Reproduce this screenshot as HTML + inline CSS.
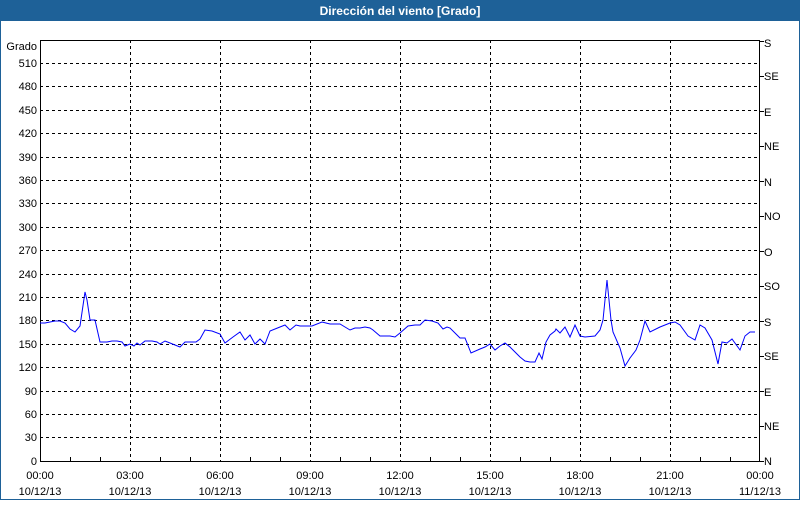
<!DOCTYPE html>
<html><head><style>
body{margin:0;width:800px;height:500px;overflow:hidden;background:#fff;font-family:"Liberation Sans",sans-serif;}
</style></head><body>
<svg width="800" height="500" xmlns="http://www.w3.org/2000/svg" font-family="Liberation Sans, sans-serif" font-size="11">
<rect x="0" y="0" width="800" height="500" fill="#fff"/>
<rect x="0" y="0" width="800" height="21" fill="#1e6198"/>
<rect x="0.5" y="0.5" width="799" height="499" fill="none" stroke="#1e6198"/>
<text x="400" y="15" fill="#fff" font-weight="bold" font-size="12" text-anchor="middle">Dirección del viento [Grado]</text>
<g stroke="#000" stroke-dasharray="3,3" stroke-width="1">
<line x1="40" y1="63.5" x2="760" y2="63.5"/><line x1="40" y1="86.5" x2="760" y2="86.5"/><line x1="40" y1="110.5" x2="760" y2="110.5"/><line x1="40" y1="133.5" x2="760" y2="133.5"/><line x1="40" y1="157.5" x2="760" y2="157.5"/><line x1="40" y1="180.5" x2="760" y2="180.5"/><line x1="40" y1="203.5" x2="760" y2="203.5"/><line x1="40" y1="227.5" x2="760" y2="227.5"/><line x1="40" y1="250.5" x2="760" y2="250.5"/><line x1="40" y1="274.5" x2="760" y2="274.5"/><line x1="40" y1="297.5" x2="760" y2="297.5"/><line x1="40" y1="320.5" x2="760" y2="320.5"/><line x1="40" y1="344.5" x2="760" y2="344.5"/><line x1="40" y1="367.5" x2="760" y2="367.5"/><line x1="40" y1="391.5" x2="760" y2="391.5"/><line x1="40" y1="414.5" x2="760" y2="414.5"/><line x1="40" y1="437.5" x2="760" y2="437.5"/>
<line x1="130.5" y1="40" x2="130.5" y2="461"/><line x1="220.5" y1="40" x2="220.5" y2="461"/><line x1="310.5" y1="40" x2="310.5" y2="461"/><line x1="400.5" y1="40" x2="400.5" y2="461"/><line x1="490.5" y1="40" x2="490.5" y2="461"/><line x1="580.5" y1="40" x2="580.5" y2="461"/><line x1="670.5" y1="40" x2="670.5" y2="461"/>
</g>
<rect x="40.5" y="40.5" width="719" height="421" fill="none" stroke="#000"/>
<g stroke="#000">
<line x1="70.5" y1="457" x2="70.5" y2="461"/><line x1="100.5" y1="457" x2="100.5" y2="461"/><line x1="160.5" y1="457" x2="160.5" y2="461"/><line x1="190.5" y1="457" x2="190.5" y2="461"/><line x1="250.5" y1="457" x2="250.5" y2="461"/><line x1="280.5" y1="457" x2="280.5" y2="461"/><line x1="340.5" y1="457" x2="340.5" y2="461"/><line x1="370.5" y1="457" x2="370.5" y2="461"/><line x1="430.5" y1="457" x2="430.5" y2="461"/><line x1="460.5" y1="457" x2="460.5" y2="461"/><line x1="520.5" y1="457" x2="520.5" y2="461"/><line x1="550.5" y1="457" x2="550.5" y2="461"/><line x1="610.5" y1="457" x2="610.5" y2="461"/><line x1="640.5" y1="457" x2="640.5" y2="461"/><line x1="700.5" y1="457" x2="700.5" y2="461"/><line x1="730.5" y1="457" x2="730.5" y2="461"/>
<line x1="760" y1="41.5" x2="764" y2="41.5"/><line x1="760" y1="76.5" x2="764" y2="76.5"/><line x1="760" y1="111.5" x2="764" y2="111.5"/><line x1="760" y1="146.5" x2="764" y2="146.5"/><line x1="760" y1="181.5" x2="764" y2="181.5"/><line x1="760" y1="216.5" x2="764" y2="216.5"/><line x1="760" y1="251.5" x2="764" y2="251.5"/><line x1="760" y1="286.5" x2="764" y2="286.5"/><line x1="760" y1="321.5" x2="764" y2="321.5"/><line x1="760" y1="356.5" x2="764" y2="356.5"/><line x1="760" y1="391.5" x2="764" y2="391.5"/><line x1="760" y1="426.5" x2="764" y2="426.5"/><line x1="760" y1="461.5" x2="764" y2="461.5"/>
</g>
<g fill="#000" text-anchor="end">
<text x="37" y="50">Grado</text>
<text x="37" y="67">510</text><text x="37" y="90">480</text><text x="37" y="114">450</text><text x="37" y="137">420</text><text x="37" y="161">390</text><text x="37" y="184">360</text><text x="37" y="207">330</text><text x="37" y="231">300</text><text x="37" y="254">270</text><text x="37" y="278">240</text><text x="37" y="301">210</text><text x="37" y="324">180</text><text x="37" y="348">150</text><text x="37" y="371">120</text><text x="37" y="395">90</text><text x="37" y="418">60</text><text x="37" y="441">30</text><text x="37" y="465">0</text>
</g>
<g fill="#000">
<text x="764" y="47">S</text><text x="764" y="80">SE</text><text x="764" y="116">E</text><text x="764" y="150">NE</text><text x="764" y="186">N</text><text x="764" y="220">NO</text><text x="764" y="256">O</text><text x="764" y="290">SO</text><text x="764" y="326">S</text><text x="764" y="360">SE</text><text x="764" y="396">E</text><text x="764" y="430">NE</text><text x="764" y="465">N</text>
</g>
<g fill="#000" text-anchor="middle">
<text x="40" y="479">00:00</text><text x="40" y="495">10/12/13</text>
<text x="130" y="479">03:00</text><text x="130" y="495">10/12/13</text>
<text x="220" y="479">06:00</text><text x="220" y="495">10/12/13</text>
<text x="310" y="479">09:00</text><text x="310" y="495">10/12/13</text>
<text x="400" y="479">12:00</text><text x="400" y="495">10/12/13</text>
<text x="490" y="479">15:00</text><text x="490" y="495">10/12/13</text>
<text x="580" y="479">18:00</text><text x="580" y="495">10/12/13</text>
<text x="670" y="479">21:00</text><text x="670" y="495">10/12/13</text>
<text x="760" y="479">00:00</text><text x="760" y="495">11/12/13</text>
</g>
<polyline fill="none" stroke="#0000ff" stroke-width="1" points="40,323 45,323 50,322 55,321 60,321 65,323 70,329 75,332 80,326 85,292 87,300 90,320 95,320 100,342 107,342 112,341 117,341 122,342 125,346 130,344 134,346 137,343 140,345 145,341 152,341 157,342 160,344 165,341 170,343 175,345 180,347 185,342 196,342 200,339 205,330 212,331 220,334 225,343 233,337 240,332 245,340 250,335 255,344 260,339 265,344 270,331 275,329 280,327 285,325 290,330 296,325 300,326 312,326 322,322 330,324 340,324 345,327 350,330 355,328 360,328 365,327 370,328 373,330 380,336 390,336 395,337 400,333 408,326 415,325 420,325 425,320 432,321 438,323 443,329 447,327 450,328 455,333 460,338 465,338 471,353 480,349 485,347 490,344 495,350 500,346 505,343 510,347 515,352 520,357 525,361 530,362 535,362 539,353 542,359 546,342 550,335 555,331 556,329 560,333 565,327 570,337 575,325 580,336 585,337 595,336 600,330 603,320 605,300 607,280 609,300 611,320 613,332 620,348 625,366 630,358 636,350 640,340 645,321 650,332 660,327 670,323 675,322 680,325 688,336 695,340 700,325 705,328 712,340 718,364 722,342 727,343 732,339 740,350 745,336 750,332 755,332"/>
</svg>
</body></html>
